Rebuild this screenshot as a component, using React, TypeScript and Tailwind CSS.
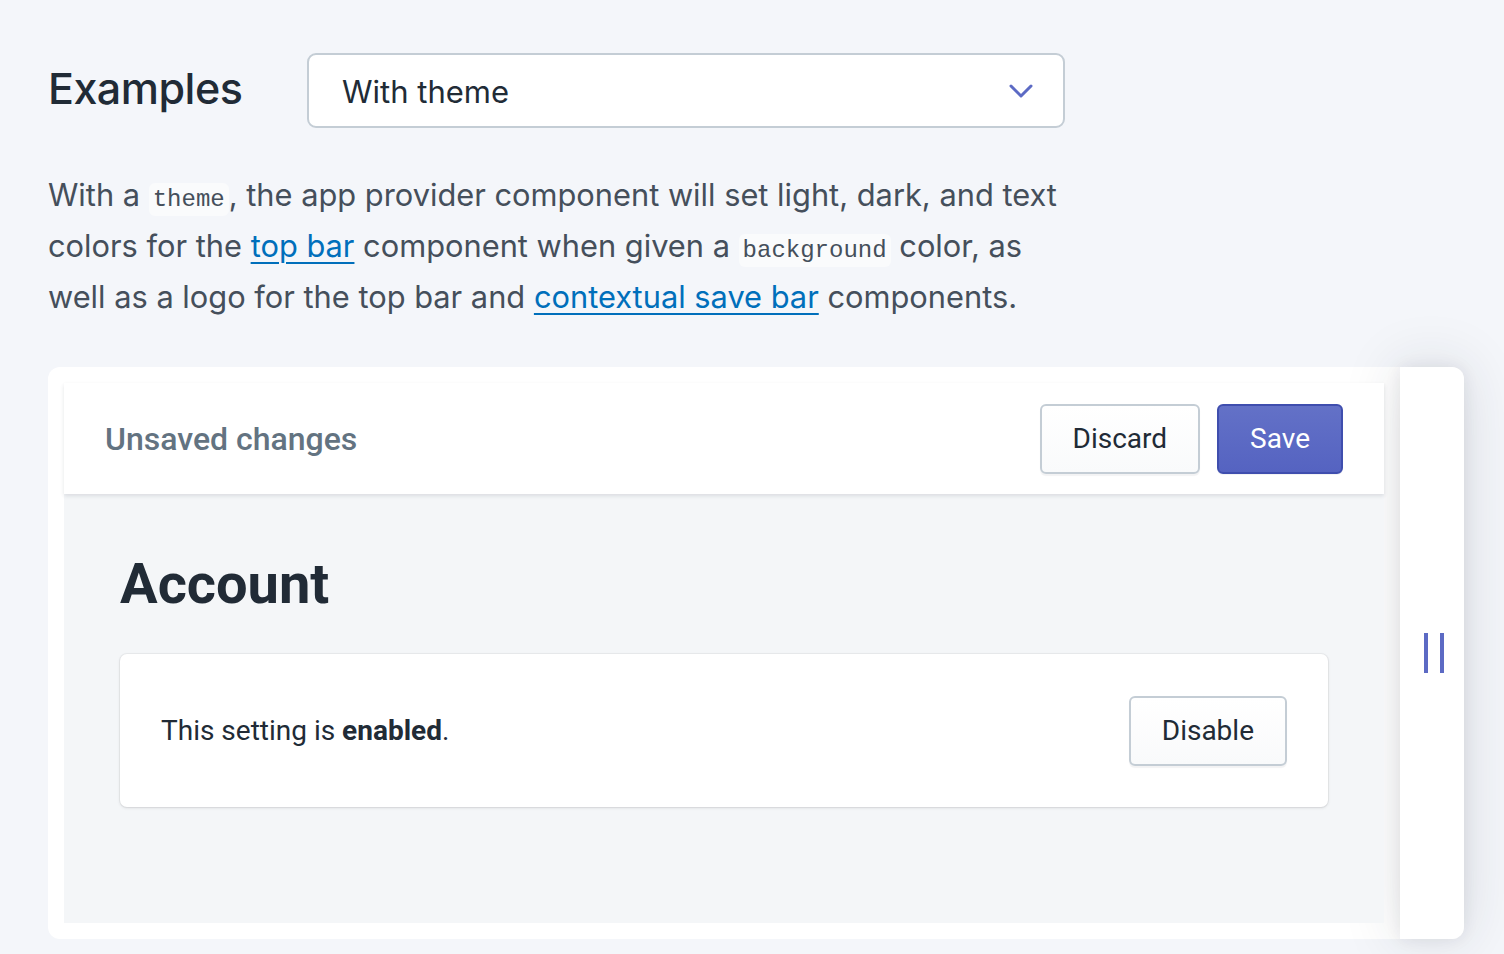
import { ChevronDown } from "lucide-react";

const docFont = { fontFamily: "Inter, 'Liberation Sans', sans-serif" };

function Code({ children }: { children: string }) {
  return (
    <code className="rounded-md bg-[#fafbfc] px-[4px] py-[3px] font-['Liberation_Mono',monospace] text-[24px] leading-none text-[#454f5b]">
      {children}
    </code>
  );
}

function Btn({ children, primary = false }: { children: string; primary?: boolean }) {
  return (
    <button
      className={
        primary
          ? "h-[70px] rounded-[6px] border-2 border-[#3f4eae] bg-gradient-to-b from-[#6371c7] to-[#5563c1] px-[31px] text-[28px] text-white shadow-[0_1px_0_rgba(22,29,37,0.05)]"
          : "h-[70px] rounded-[6px] border-2 border-[#c4cdd5] bg-gradient-to-b from-white to-[#f9fafb] px-[31px] text-[28px] text-[#212b36] shadow-[0_2px_1px_rgba(22,29,37,0.05)]"
      }
    >
      {children}
    </button>
  );
}

export default function App() {
  return (
    <div className="min-h-[954px] overflow-hidden bg-[#f4f6fa] pl-12 pt-[53px]">
      <div style={docFont} className="w-[1035px]">
        <div className="flex w-[1017px] items-center">
          <h1 className="-mt-1 w-[259px] text-[43px] font-medium leading-none tracking-[-0.5px] text-[#212b36]">
            Examples
          </h1>
          <div className="flex h-[75px] flex-1 items-center justify-between rounded-[9px] border-2 border-[#c4cdd5] bg-white pl-[33px] pr-[22px]">
            <span className="pt-[3px] text-[31px] text-[#212b36]">With theme</span>
            <ChevronDown className="h-10 w-10 text-[#5c6ac4]" strokeWidth={1.8} />
          </div>
        </div>
        <p className="mt-[41px] text-[30.8px] leading-[51px] text-[#454f5b]">
          With a <Code>theme</Code>, the app provider component will set light, dark, and text colors for the{" "}
          <a className="text-[#006fbb] underline decoration-2 underline-offset-[5px]">top bar</a> component when
          given a <Code>background</Code> color, as well as a logo for the top bar and{" "}
          <a className="text-[#006fbb] underline decoration-2 underline-offset-[5px]">contextual save bar</a>{" "}
          components.
        </p>
      </div>

      <div className="mt-[45px] flex h-[572px] w-[1416px] rounded-xl bg-white font-['Roboto',sans-serif]">
        <div className="flex-1 p-4">
          <div className="relative z-10 flex h-full flex-col bg-[#f4f6f8]">
            <div className="flex h-[111px] items-center justify-between bg-white px-[41px] shadow-[0_2px_4px_rgba(33,43,54,0.12)]">
              <span className="text-[32px] font-medium text-[#637381]">Unsaved changes</span>
              <div className="flex gap-[17px]">
                <Btn>Discard</Btn>
                <Btn primary>Save</Btn>
              </div>
            </div>
            <div className="px-[56px] pt-[54px]">
              <h2 className="text-[56px] font-bold leading-[72px] text-[#212b36]">Account</h2>
              <div className="mt-[34px] flex h-[153px] items-center justify-between rounded-[7px] bg-white px-[41px] shadow-[0_0_0_1px_rgba(63,63,68,0.05),0_1px_3px_rgba(63,63,68,0.15)]">
                <p className="text-[28px] text-[#212b36]">
                  This setting is <b className="font-bold">enabled</b>.
                </p>
                <Btn>Disable</Btn>
              </div>
            </div>
          </div>
        </div>
        <div className="flex w-16 items-center justify-center gap-3 rounded-r-xl bg-white pl-1 shadow-[0_0_16px_rgba(33,43,54,0.08),0_0_60px_rgba(33,43,54,0.14)]">
          <span className="h-10 w-1 bg-[#5c6ac4]" />
          <span className="h-10 w-1 bg-[#5c6ac4]" />
        </div>
      </div>
    </div>
  );
}
